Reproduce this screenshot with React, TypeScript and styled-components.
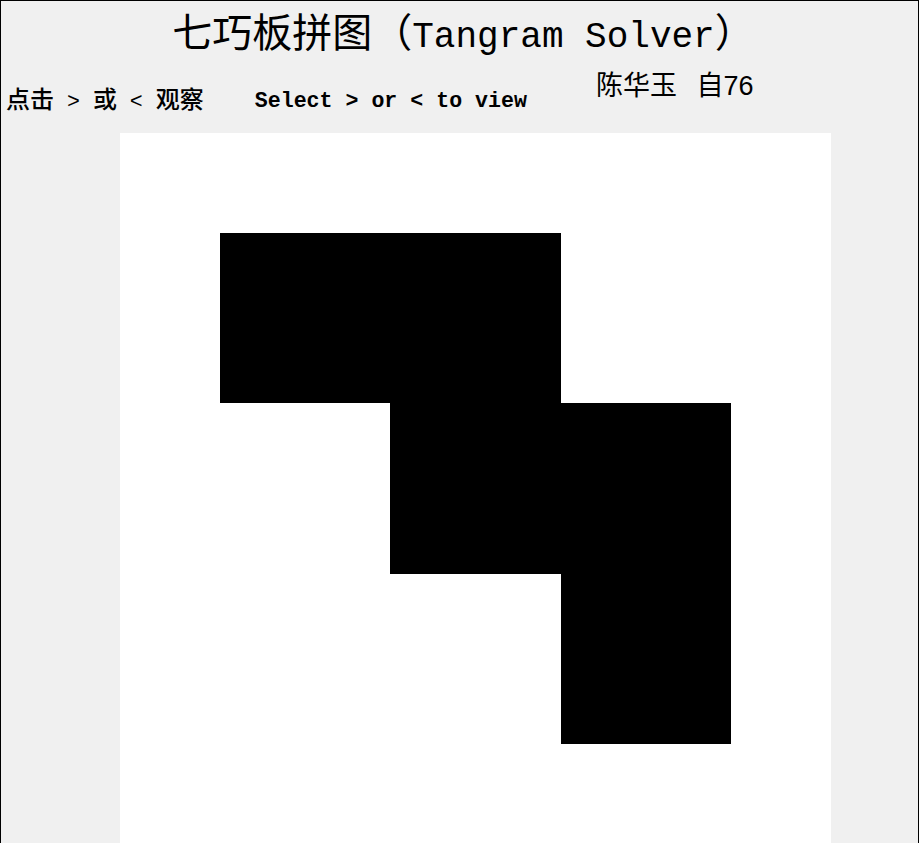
import React from "react";
import styled, { createGlobalStyle } from "styled-components";

const GlobalStyle = createGlobalStyle`
  html, body {
    margin: 0;
    padding: 0;
    background: #f0f0f0;
    overflow: hidden;
  }
  * { box-sizing: border-box; }
`;

const Page = styled.div`
  min-height: 100vh;
  border: 1px solid #000;
  background: #f0f0f0;
  color: #000;
  font-family: "Liberation Mono", "Noto Sans CJK SC", monospace;
`;

const Title = styled.h1`
  margin: 0;
  padding: 9px 0 0 8px;
  height: 66px;
  text-align: center;
  font-weight: normal;
  line-height: 40px;
  white-space: nowrap;
`;

const Han = styled.span<{ $size: number; $weight?: number }>`
  font-family: "Noto Sans CJK SC", sans-serif;
  font-size: ${(p) => p.$size}px;
  font-weight: ${(p) => p.$weight ?? 400};
`;

const Latin = styled.span<{ $size: number; $weight?: number }>`
  font-family: "Liberation Mono", monospace;
  font-size: ${(p) => p.$size}px;
  font-weight: ${(p) => p.$weight ?? 400};
`;

const InfoRow = styled.div`
  display: flex;
  align-items: flex-start;
  height: 66px;
  padding-left: 5px;
  white-space: pre;
`;

const Hint = styled.div<{ $gap?: number; $top?: number }>`
  line-height: 30px;
  padding-top: ${(p) => p.$top ?? 16}px;
  margin-left: ${(p) => p.$gap ?? 0}px;
`;

const Author = styled.div`
  margin-left: 69px;
  margin-top: 4px;
  font-family: "Liberation Sans", "Noto Sans CJK SC", sans-serif;
  font-size: 27px;
  line-height: 30px;
  word-spacing: 12px;
`;

const Board = styled.div`
  margin-left: 119px;
  width: 711px;
  height: 710px;
  background: #fff;
`;

const unit = [100, 270, 441, 611];

const shape = [
  [unit[0], unit[0]],
  [unit[2], unit[0]],
  [unit[2], unit[1]],
  [unit[3], unit[1]],
  [unit[3], unit[3]],
  [unit[2], unit[3]],
  [unit[2], unit[2]],
  [unit[1], unit[2]],
  [unit[1], unit[1]],
  [unit[0], unit[1]],
]
  .map((p) => p.join(","))
  .join(" ");

export default function App() {
  return (
    <>
      <GlobalStyle />
      <Page>
        <Title>
          <Han $size={40}>七巧板拼图（</Han>
          <Latin $size={36}>Tangram Solver</Latin>
          <Han $size={40}>）</Han>
        </Title>
        <InfoRow>
          <Hint>
            <Han $size={24} $weight={500}>点击</Han>
            <Latin $size={21.6}> &gt; </Latin>
            <Han $size={24} $weight={500}>或</Han>
            <Latin $size={21.6}> &lt; </Latin>
            <Han $size={24} $weight={500}>观察</Han>
          </Hint>
          <Hint $gap={51} $top={19}>
            <Latin $size={21.6} $weight={700}>Select &gt; or &lt; to view</Latin>
          </Hint>
          <Author>陈华玉 自76</Author>
        </InfoRow>
        <Board>
          <svg width="711" height="710" viewBox="0 0 711 710">
            <polygon points={shape} fill="#000" shapeRendering="crispEdges" />
          </svg>
        </Board>
      </Page>
    </>
  );
}
